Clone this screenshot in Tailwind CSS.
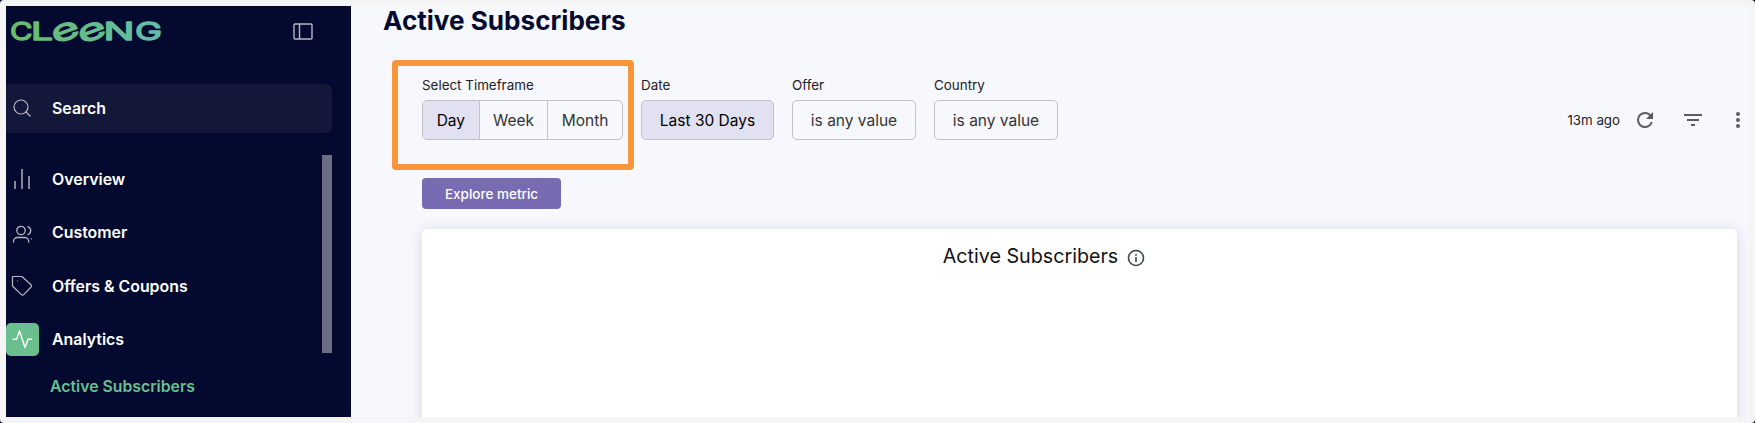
<!DOCTYPE html>
<html lang="en">
<head>
  <meta charset="UTF-8" />
  <meta name="viewport" content="width=device-width, initial-scale=1.0"/>
  <title>Active Subscribers - Cleeng</title>
  <script src="https://cdn.jsdelivr.net/npm/@tailwindcss/browser@4"></script>
</head>
<body class="bg-[#040a2f] font-['Inter',sans-serif] overflow-hidden">
  <div class="h-[423px] w-[1755px] p-[6px] bg-[#f5f5f5] rounded-[4px]">
    <div class="flex h-[411px] w-full overflow-hidden">

      <!-- Sidebar -->
      <aside class="w-[345px] shrink-0 bg-[#040a2f] text-white flex flex-col">
        <div class="flex justify-between h-[78px] pt-[8px] pl-1 pr-[38px]">
          <svg class="overflow-visible" width="154" height="40" viewBox="0 -6 154 40" font-family="Inter, sans-serif" font-weight="400" fill="url(#logo)" stroke="url(#logo)" stroke-width="1.3" stroke-linejoin="round">
            <defs>
              <linearGradient id="logo" gradientUnits="userSpaceOnUse" x1="0" y1="0" x2="154" y2="0">
                <stop offset="0" stop-color="#69bd69"/>
                <stop offset="1" stop-color="#62bcae"/>
              </linearGradient>
            </defs>
            <text x="0" y="20" font-size="24.500" textLength="22.500" lengthAdjust="spacingAndGlyphs">C</text>
            <text x="21" y="20" font-size="24.500" textLength="22" lengthAdjust="spacingAndGlyphs">L</text>
            <text x="41.500" y="20" font-size="30" textLength="28" lengthAdjust="spacingAndGlyphs" transform="rotate(-20 55 12)">e</text>
            <text x="68" y="20" font-size="30" textLength="28" lengthAdjust="spacingAndGlyphs" transform="rotate(-20 82 12)">e</text>
            <text x="93.500" y="20" font-size="24.500" textLength="31" lengthAdjust="spacingAndGlyphs">N</text>
            <text x="125" y="20" font-size="24.500" textLength="27" lengthAdjust="spacingAndGlyphs">G</text>
          </svg>
          <svg class="mt-[9px]" width="20" height="18" viewBox="0 0 20 18" fill="none" stroke="#b5b6c2" stroke-width="1.4">
            <rect x="1" y="1" width="18" height="15" rx="1"/>
            <path d="M6.500 1v15"/>
          </svg>
        </div>

        <div class="flex items-center w-[326px] h-[49px] bg-[#13183b] rounded-r-md">
          <svg class="ml-[7px] -mt-px" width="18" height="18" viewBox="0 0 18 18" fill="none" stroke="#b5b6c2" stroke-width="1.2" stroke-linecap="round">
            <circle cx="8" cy="8" r="7"/>
            <path d="M13 13l4 4"/>
          </svg>
          <span class="ml-[21px] text-[15.9px] font-semibold">Search</span>
        </div>

        <div class="flex justify-between pt-[22px] pr-[19px]">
          <nav class="text-[15.9px] font-semibold -mt-[2px]">
            <a class="flex items-center h-[53px]">
              <svg class="-mt-[2px]" width="33" height="22" viewBox="0 0 33 22" fill="none" stroke="#a4a6b5" stroke-width="1.6">
                <path d="M9 13v8M16 1v20M23 8v13"/>
              </svg>
              <span class="ml-[13px]">Overview</span>
            </a>
            <a class="flex items-center h-[53px]">
              <svg class="mt-[2px]" width="33" height="22" viewBox="0 0 33 22" fill="none" stroke="#b5b6c2" stroke-width="1.3" stroke-linecap="round">
                <circle cx="15" cy="7.500" r="4.200"/>
                <path d="M7.500 19v-.500a4 4 0 0 1 4-4h7.200a4 4 0 0 1 4 4V19M21.800 3.600a4.200 4.200 0 0 1 0 8M25.400 15.800v.1"/>
              </svg>
              <span class="ml-[13px]">Customer</span>
            </a>
            <a class="flex items-center h-[54px]">
              <svg width="33" height="22" viewBox="0 0 33 22" fill="none" stroke="#b5b6c2" stroke-width="1.2" stroke-linejoin="round">
                <path d="M6.500 1.500h9.500l9 8.300a1.500 1.500 0 0 1 0 2.200l-7.300 7.600a1.600 1.600 0 0 1-2.300 0L6.500 11z"/>
                <path d="M11 6h.9"/>
              </svg>
              <span class="ml-[13px] pt-px">Offers &amp; Coupons</span>
            </a>
            <a class="flex items-center h-[53px]">
              <span class="w-[33px] h-[33px] rounded-[5px] bg-[#69c08e]">
                <svg width="33" height="33" viewBox="0 0 33 33" fill="none" stroke="#fff" stroke-width="1.4" stroke-linecap="round" stroke-linejoin="round">
                  <path d="M7 16.300h3.500L13.500 8l5.500 16.500 3-8.200h3.500"/>
                </svg>
              </span>
              <span class="ml-[13px]">Analytics</span>
            </a>
            <a class="block pl-11 pt-[9px] leading-6 text-[15.8px] text-[#69c08e]">Active Subscribers</a>
          </nav>
          <div class="w-[10px] h-[198px] bg-[#6c6d84]"></div>
        </div>
      </aside>

      <!-- Dashboard -->
      <main class="grow bg-[#f7f8fe] pl-[32px]">
        <h1 class="text-[26.1px] leading-[30px] font-bold text-[#040a2f]">Active Subscribers</h1>

        <div class="flex items-start mt-6 pl-[9px]">
          <!-- Highlighted timeframe filter -->
          <div class="w-[242px] h-[110px] border-[6px] border-[#f8963c] rounded-[4px] pl-6 pt-[10px]">
            <label class="block h-[24px] leading-[18px] text-[13.4px] text-[#1c2125]">Select Timeframe</label>
            <div class="flex w-[201px] h-10 border border-[#c1c2c8] rounded-[5px] overflow-hidden text-[15.5px] text-[#343434]">
              <button class="w-[56px] pt-px bg-[#e1e1f1] text-black">Day</button>
              <button class="w-[69px] pt-px border-l border-[#c1c2c8]">Week</button>
              <button class="w-[75px] pt-px border-l border-[#c1c2c8]">Month</button>
            </div>
          </div>

          <div class="flex gap-[18px] ml-[7px] pt-4 text-[15.5px] text-[#343434]">
            <div>
              <label class="block h-[24px] leading-[18px] text-[13.4px] text-[#1c2125]">Date</label>
              <button class="w-[133px] h-10 pt-px border border-[#c1c2c8] rounded-[5px] bg-[#e1e1f1] text-black">Last 30 Days</button>
            </div>
            <div>
              <label class="block h-[24px] leading-[18px] text-[13.4px] text-[#1c2125]">Offer</label>
              <button class="w-[124px] h-10 pt-px border border-[#c1c2c8] rounded-[5px]">is any value</button>
            </div>
            <div>
              <label class="block h-[24px] leading-[18px] text-[13.4px] text-[#1c2125]">Country</label>
              <button class="w-[124px] h-10 pt-px border border-[#c1c2c8] rounded-[5px]">is any value</button>
            </div>
          </div>

          <div class="flex items-center ml-auto mt-[48px] h-6 text-[#5a5d61]">
            <span class="pt-[2px] text-[13.3px] text-[#1c2125]">13m ago</span>
            <svg class="ml-[13px]" width="24" height="24" viewBox="0 0 24 24" fill="currentColor">
              <path d="M17.650 6.350A7.960 7.960 0 0 0 12 4a8 8 0 1 0 7.730 10h-2.080A6 6 0 1 1 12 6c1.660 0 3.140.690 4.220 1.780L13 11h7V4z"/>
            </svg>
            <svg class="ml-6" width="24" height="24" viewBox="0 0 24 24" fill="currentColor">
              <path d="M10 18h4v-2h-4zM3 6v2h18V6zm3 7h12v-2H6z"/>
            </svg>
            <svg class="ml-[21px] -mr-[1px]" width="24" height="24" viewBox="0 0 24 24" fill="currentColor">
              <circle cx="12" cy="6" r="2"/>
              <circle cx="12" cy="12" r="2"/>
              <circle cx="12" cy="18" r="2"/>
            </svg>
          </div>
        </div>

        <button class="block ml-[39px] mt-2 w-[139px] h-[31px] pt-px rounded-[4px] bg-[#786bb3] text-white text-[13.5px] font-medium">Explore metric</button>

        <section class="ml-[39px] mt-5 w-[1315px] h-[230px] bg-white rounded-[5px] shadow-[0_2px_14px_rgba(60,60,90,0.18)]">
          <div class="flex justify-center items-center pt-[13px] pr-[70px] leading-7 text-[19.7px] text-[#101214]">
            Active Subscribers
            <svg class="ml-2 mt-[3px]" width="20" height="20" viewBox="0 0 20 20" fill="none" stroke="#3f4448" stroke-width="1.6">
              <circle cx="10" cy="10" r="7.500"/>
              <path d="M10 9v5M10 6v1.700"/>
            </svg>
          </div>
        </section>
      </main>
    </div>
  </div>
</body>
</html>
